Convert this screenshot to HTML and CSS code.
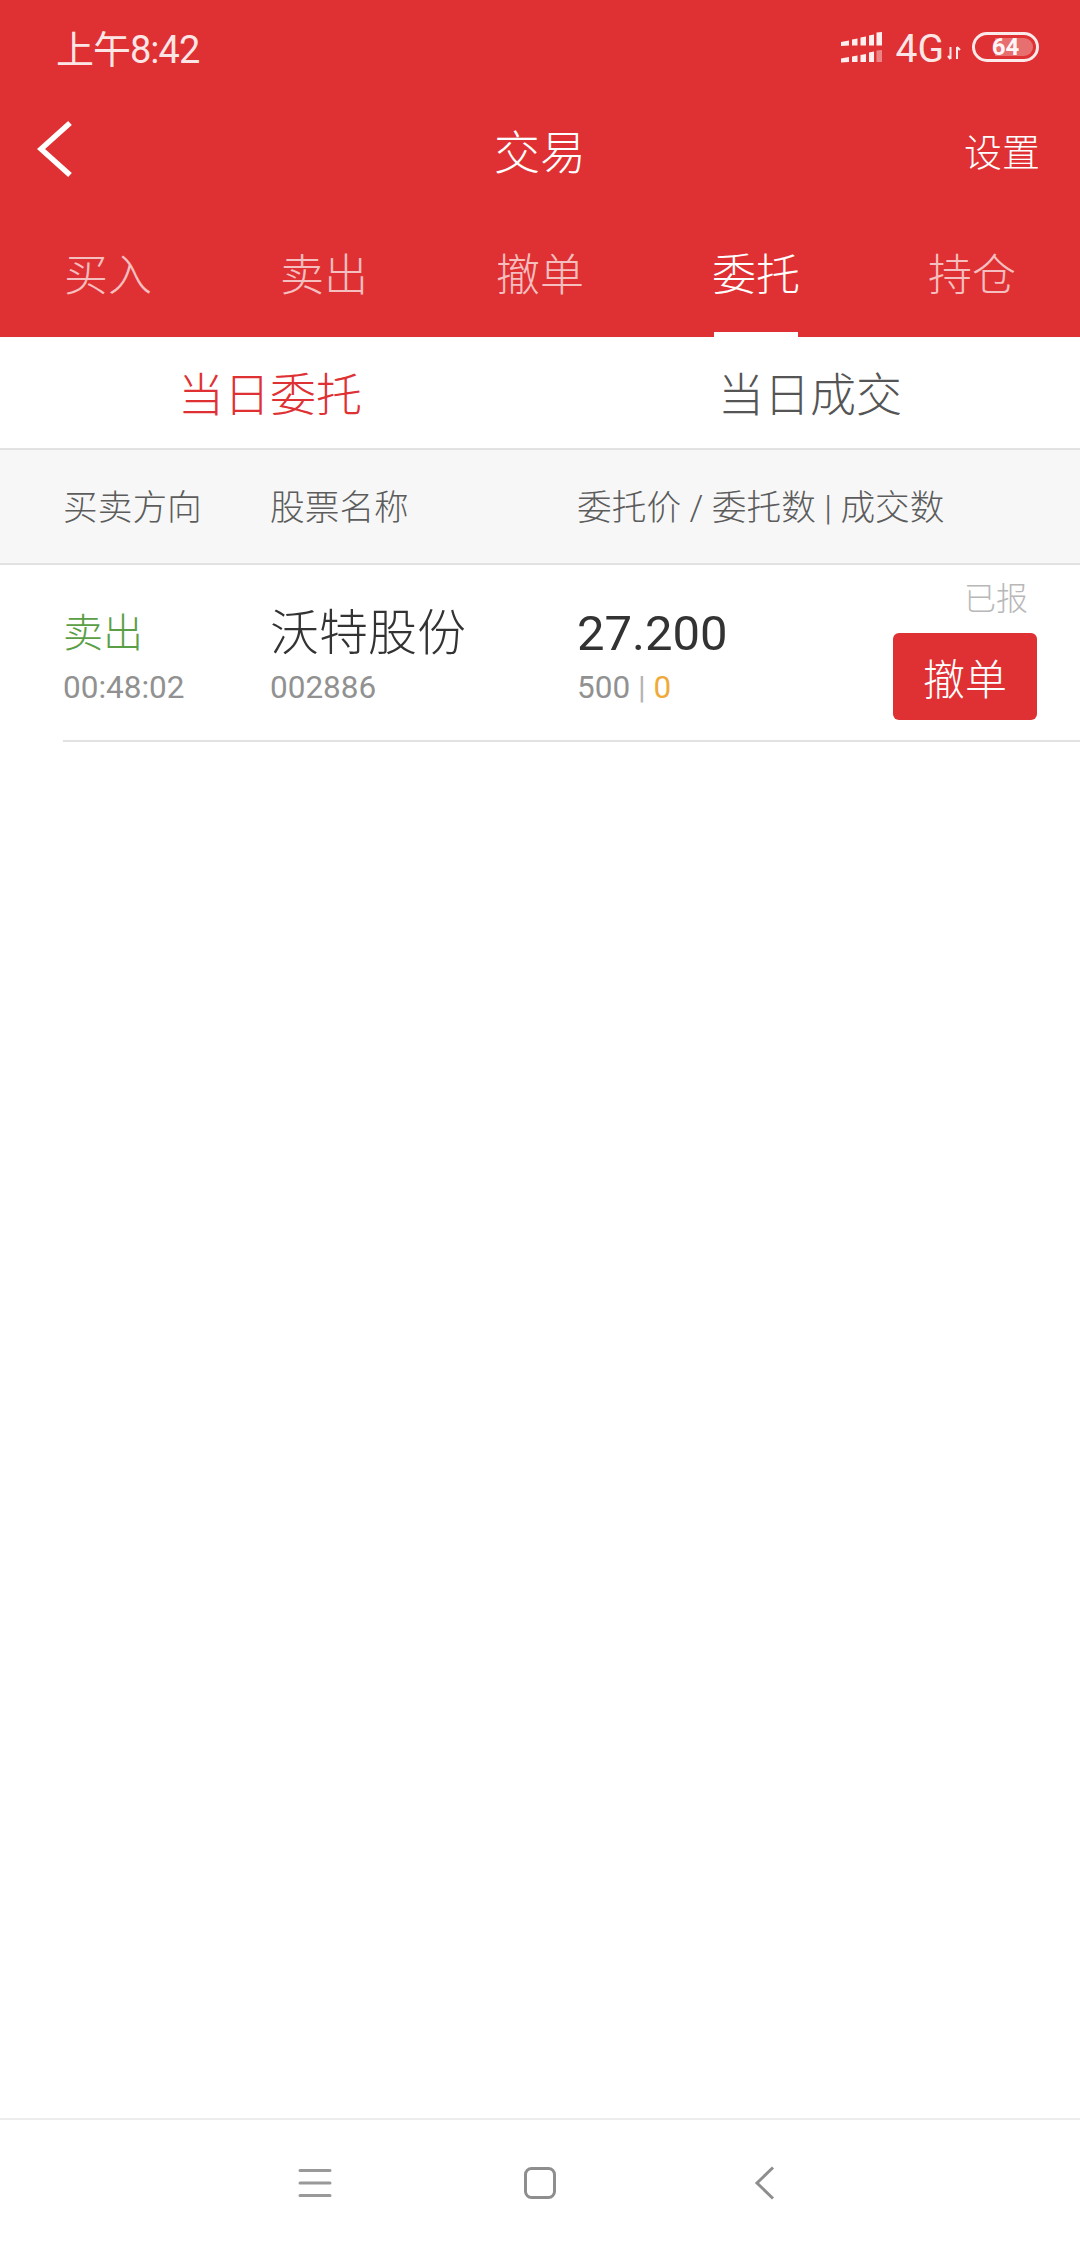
FILE: index.html
```html
<!DOCTYPE html>
<html lang="zh-CN">
<head>
    <meta charset="UTF-8">
    <meta name="viewport" content="width=device-width, initial-scale=1.0">
    <title>交易</title>
    <link rel="stylesheet" href="styles.css">
</head>
<body>
    <div class="app">
        <header class="app-header">
            <div class="status-bar">
                <span class="status-time">上午8:42</span>
                <div class="status-icons">
                    <svg class="icon-signal" width="41" height="31" viewBox="0 0 41 31">
                        <path d="M0 10l8-1.500v5l-8 0.500zM11 7.500l5.500-1v7H11zM19.500 5.500l5.500-1v9h-5.500zM28 3.500l5-1v11h-5zM35.500 0.500L41 0v13.500h-5.500z" fill="#fff" opacity="0.92"/>
                        <path d="M0 26.500l8-1.500v5l-8 0.500zM11 24.500l5.500-1V30H11zM19.500 23l5.500-1v8h-5.500zM28 20.500l5-1V30h-5z" fill="#fff" opacity="0.92"/>
                        <path d="M35.500 18.500L41 18v12h-5.500z" fill="#fff" opacity="0.4"/>
                    </svg>
                    <span class="status-net">4G</span>
                    <svg class="icon-updown" width="14" height="14" viewBox="0 0 14 14">
                        <path d="M3.500 1v12M1 10l2.500 3M10 13V1M10 1l3 3" fill="none" stroke="#fff" stroke-width="2" opacity="0.9"/>
                    </svg>
                    <div class="battery">
                        <div class="battery-level"></div>
                        <span class="battery-num">64</span>
                    </div>
                </div>
            </div>

            <div class="title-bar">
                <svg class="icon-back" width="38" height="60" viewBox="0 0 38 60">
                    <path d="M33 4L4 30l29 26" fill="none" stroke="#fff" stroke-width="5.500"/>
                </svg>
                <h1 class="page-title">交易</h1>
                <a class="title-link">设置</a>
            </div>

            <nav class="tabs">
                <a class="tab">买入</a>
                <a class="tab">卖出</a>
                <a class="tab">撤单</a>
                <a class="tab tab-active">委托</a>
                <a class="tab">持仓</a>
            </nav>
        </header>

        <div class="sub-tabs">
            <a class="sub-tab sub-tab-active">当日委托</a>
            <a class="sub-tab">当日成交</a>
        </div>

        <div class="table-head">
            <span class="col-side">买卖方向</span>
            <span class="col-name">股票名称</span>
            <span class="col-price">委托价 / 委托数 | 成交数</span>
        </div>

        <main class="table-body">
            <div class="order-row">
                <div class="col-side order-cell">
                    <div class="order-side">卖出</div>
                    <div class="order-sub">00:48:02</div>
                </div>
                <div class="col-name order-cell">
                    <div class="order-name">沃特股份</div>
                    <div class="order-sub">002886</div>
                </div>
                <div class="col-price order-cell">
                    <div class="order-price">27.200</div>
                    <div class="order-sub">500 <span class="order-sep">|</span> <span class="order-deal">0</span></div>
                </div>
                <div class="col-action">
                    <span class="order-status">已报</span>
                    <button class="btn-cancel">撤单</button>
                </div>
            </div>
        </main>

        <footer class="nav-bar">
            <svg width="40" height="40" viewBox="0 0 40 40">
                <path d="M5 7.500h30M5 20h30M5 32.500h30" fill="none" stroke="#999" stroke-width="3" stroke-linecap="round"/>
            </svg>
            <svg width="40" height="40" viewBox="0 0 40 40">
                <rect x="5.500" y="5.500" width="29" height="29" rx="6" fill="none" stroke="#8e8e8e" stroke-width="3"/>
            </svg>
            <svg width="40" height="40" viewBox="0 0 40 40">
                <path d="M28 4.500L12 20l16 15.500" fill="none" stroke="#8e8e8e" stroke-width="3"/>
            </svg>
        </footer>
    </div>
</body>
</html>
```

FILE: styles.css
```css
:root {
    --color-primary: #df3133;
    --color-text: #333333;
    --color-muted: #919191;
    --color-border: #e2e2e2;
}

* {
    margin: 0;
    padding: 0;
    box-sizing: border-box;
}

body {
    font-family: Roboto, "Noto Sans CJK SC", sans-serif;
    font-weight: 300;
    background: #ffffff;
    color: var(--color-text);
}

.app {
    width: 1080px;
    height: 2248px;
    display: flex;
    flex-direction: column;
    overflow: hidden;
}

.app-header {
    height: 337px;
    background: var(--color-primary);
    color: #ffffff;
}

.status-bar {
    height: 92px;
    padding: 0 41px 0 56px;
    display: flex;
    align-items: center;
    justify-content: space-between;
}

.status-time {
    font-size: 38px;
    font-weight: 400;
    color: rgba(255, 255, 255, 0.9);
    letter-spacing: -1px;
}

.status-icons {
    display: flex;
    align-items: center;
}

.icon-signal {
    margin: 2px 13px 0 0;
}

.status-net {
    font-size: 39px;
    font-weight: 400;
    line-height: 46px;
    margin: 5px 3px 0 1px;
    color: rgba(255, 255, 255, 0.9);
}

.icon-updown {
    margin: 14px 11px 0 0;
}

.battery {
    position: relative;
    width: 67px;
    height: 30px;
    margin-top: 2px;
    border: 3px solid rgba(255, 255, 255, 0.9);
    border-radius: 15px;
    display: flex;
    align-items: center;
    justify-content: center;
}

.battery-level {
    position: absolute;
    top: 3px;
    right: 3px;
    bottom: 3px;
    width: 38px;
    background: rgba(255, 255, 255, 0.3);
    border-radius: 0 10px 10px 0;
}

.battery-num {
    position: relative;
    font-size: 24px;
    font-weight: 700;
    color: rgba(255, 255, 255, 0.95);
}

.title-bar {
    height: 120px;
    padding: 0 40px 6px 37px;
    display: flex;
    align-items: center;
    justify-content: space-between;
    position: relative;
}

.page-title {
    position: absolute;
    left: 0;
    right: 0;
    text-align: center;
    font-size: 46px;
    font-weight: 300;
}

.title-link {
    font-size: 38px;
    font-weight: 300;
}

.tabs {
    height: 125px;
    display: flex;
}

.tab {
    flex: 1;
    display: flex;
    align-items: center;
    justify-content: center;
    position: relative;
    padding-bottom: 5px;
    font-size: 44px;
    color: rgba(255, 255, 255, 0.7);
}

.tab-active {
    color: #ffffff;
}

.tab-active::after {
    content: "";
    position: absolute;
    left: 66px;
    right: 66px;
    bottom: 0;
    height: 5px;
    background: #ffffff;
}

.sub-tabs {
    height: 113px;
    padding-bottom: 4px;
    display: flex;
    border-bottom: 2px solid var(--color-border);
}

.sub-tab {
    flex: 1;
    display: flex;
    align-items: center;
    justify-content: center;
    font-size: 46px;
    color: #555555;
}

.sub-tab-active {
    color: var(--color-primary);
}

.table-head {
    height: 115px;
    padding: 0 0 4px 63px;
    display: flex;
    align-items: center;
    background: #f7f7f7;
    border-bottom: 2px solid var(--color-border);
    font-size: 34.700px;
    color: #5c5c5c;
}

.col-side {
    width: 207px;
}

.col-name {
    width: 307px;
}

.col-price {
    flex: 1;
}

.table-body {
    flex: 1;
}

.order-row {
    height: 177px;
    margin-left: 63px;
    display: flex;
    align-items: flex-end;
    border-bottom: 2px solid var(--color-border);
}

.order-cell {
    padding-bottom: 32px;
}

.order-side {
    font-size: 40px;
    color: #5a9e45;
    line-height: 60px;
    margin-bottom: 4px;
}

.order-name {
    font-size: 49px;
    line-height: 60px;
    margin-bottom: 4px;
}

.order-price {
    font-size: 49px;
    font-weight: 400;
    line-height: 60px;
    margin-bottom: 4px;
}

.order-sub {
    font-size: 31.500px;
    font-weight: 400;
    line-height: 40px;
    color: var(--color-muted);
}

.order-sep {
    color: #b5b5b5;
}

.order-deal {
    color: #efaa3a;
}

.col-action {
    width: 144px;
    margin-right: 43px;
    padding-bottom: 20px;
    display: flex;
    flex-direction: column;
    align-items: flex-end;
}

.order-status {
    font-size: 32px;
    line-height: 46px;
    margin: 0 9px 11px 0;
    color: #b8b8b8;
}

.btn-cancel {
    width: 144px;
    height: 87px;
    border: none;
    border-radius: 6px;
    background: var(--color-primary);
    color: #ffffff;
    font-family: inherit;
    font-weight: 300;
    font-size: 42px;
}

.nav-bar {
    height: 130px;
    padding-bottom: 2px;
    display: flex;
    align-items: center;
    justify-content: center;
    gap: 185px;
    border-top: 2px solid #ececec;
}
```
